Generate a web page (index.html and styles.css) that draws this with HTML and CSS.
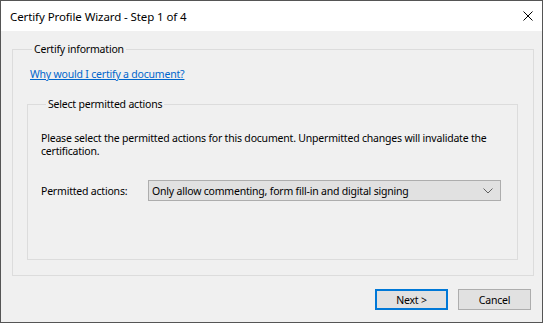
FILE: index.html
```html
<!DOCTYPE html>
<html lang="en">
  <head>
    <meta charset="UTF-8" />
    <title>Certify Profile Wizard</title>
    <link rel="stylesheet" href="styles.css">
  </head>
  <body>
    <div class="window">
      <div class="titlebar">
        <span class="title">Certify Profile Wizard - Step 1 of 4</span>
        <svg class="close" width="10" height="10" viewBox="0 0 10 10">
          <path d="M0.5 0.5L9.5 9.5M9.5 0.5L0.5 9.5" stroke="#000" stroke-width="1" fill="none" />
        </svg>
      </div>
      <div class="content">
        <fieldset class="group outer">
          <legend>Certify information</legend>
          <a class="link" href="#">Why would I certify a document?</a>
          <fieldset class="group inner">
            <legend>Select permitted actions</legend>
            <p class="desc">Please select the permitted actions for this document. Unpermitted changes will invalidate the certification.</p>
            <div class="row">
              <span class="label">Permitted actions:</span>
              <div class="combo">
                <span>Only allow commenting, form fill-in and digital signing</span>
                <svg width="10" height="6" viewBox="0 0 10 6">
                  <path d="M0.5 0.5L5 5L9.5 0.5" stroke="#606060" stroke-width="1" fill="none" />
                </svg>
              </div>
            </div>
          </fieldset>
        </fieldset>
        <div class="buttons">
          <button class="btn default">Next &gt;</button>
          <button class="btn">Cancel</button>
        </div>
      </div>
    </div>
  </body>
</html>
```

FILE: styles.css
```css
body {
  margin: 0;
  font-family: "Noto Sans", sans-serif;
  font-size: 10.5px;
  letter-spacing: -0.2px;
  color: #000;
}

.window {
  width: 543px;
  height: 323px;
  box-sizing: border-box;
  border: 1px solid #555;
  display: flex;
  flex-direction: column;
  background: #f0f0f0;
}

.titlebar {
  height: 30px;
  background: #fff;
  display: flex;
  align-items: center;
  padding: 0 8px 0 9px;

  .title {
    font-size: 11.5px;
    letter-spacing: -0.1px;
    flex: 1;
  }

  .close {
    margin-right: 1px;
  }
}

.content {
  flex: 1;
  padding: 11px 8px 12px 11px;
  display: flex;
  flex-direction: column;
}

.group {
  margin: 0;
  border: 1px solid #dcdcdc;
  min-width: 0;

  legend {
    margin-left: 5px;
    padding: 0 2px;
    line-height: 14px;
  }
}

.outer {
  padding: 0 15px 15px 14px;

  .link {
    display: block;
    margin: 10px 0 15px 3px;
    color: #0066cc;
    line-height: 16px;
    align-self: flex-start;
  }
}

.inner {
  padding: 0 16px 58px 13px;

  .desc {
    margin: 21px 0 22px;
    line-height: 13px;
  }
}

.row {
  display: flex;
  align-items: center;

  .label {
    width: 107px;
  }

  .combo {
    flex: 1;
    height: 21px;
    box-sizing: border-box;
    border: 1px solid #adadad;
    background: #e1e1e1;
    display: flex;
    align-items: center;
    justify-content: space-between;
    padding: 0 7px 0 3px;
  }
}

.buttons {
  display: flex;
  justify-content: flex-end;
  gap: 10px;
  margin-top: auto;
  padding-right: 3px;

  .btn {
    width: 73px;
    height: 21px;
    font-family: inherit;
    font-size: 10.5px;
    letter-spacing: -0.2px;
    background: #e1e1e1;
    border: 1px solid #adadad;
    padding: 0;
    color: #000;
  }

  .default {
    border: 2px solid #0078d7;
  }
}
```
